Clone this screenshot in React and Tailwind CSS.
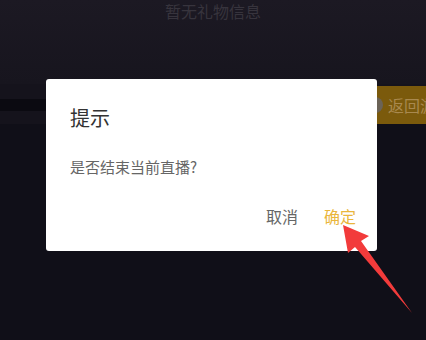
export default function App() {
  return (
    <div
      className="relative w-[426px] h-[340px] overflow-hidden bg-[#15131c]"
      style={{ fontFamily: '"Noto Sans CJK SC", "Noto Sans", sans-serif' }}
    >
      {/* page under the dialog */}
      <div className="flex flex-col">
        <div className="h-[84px] bg-gradient-to-b from-[#1c1923] to-[#17151e] flex justify-center pt-[1px]">
          <span className="text-[16px] leading-[20px] text-[#37343d]">暂无礼物信息</span>
        </div>
        <div className="flex items-center justify-between h-[38px] mt-[2px]">
          <div className="w-[60px] h-[12px] bg-[#0b0a11]"></div>
          <div className="flex items-center gap-[5px] h-[38px] w-[70px] pl-[11px] rounded-l-full bg-[#7b5a0c] overflow-hidden">
            <div className="w-[16px] h-[16px] rounded-full bg-[#6b6357] shrink-0"></div>
            <span className="text-[16px] text-[#a9894f] whitespace-nowrap">返回游</span>
          </div>
        </div>
        <div className="h-[216px] bg-[#100f18]"></div>
      </div>

      {/* dialog */}
      <div className="absolute left-[46px] top-[79px] w-[331px] h-[172px] bg-white rounded-[3px] flex flex-col">
        <div className="pl-[24px] pt-[25px] text-[20px] leading-[28px] text-[#333333]">提示</div>
        <div className="pl-[24px] pt-[25px] text-[15px] leading-[20px] text-[#666666]">是否结束当前直播?</div>
        <div className="flex justify-end gap-[26px] pr-[21px] pt-[28px] text-[16px] leading-[22px]">
          <span className="text-[#666666]">取消</span>
          <span className="text-[#eab63c]">确定</span>
        </div>
      </div>

      {/* annotation arrow */}
      <svg className="absolute left-0 top-0" width="426" height="340" viewBox="0 0 426 340">
        <polygon
          points="343,225 369,236 361,241 412,313 355,247 348,253"
          fill="#f23b3b"
        />
      </svg>
    </div>
  )
}
